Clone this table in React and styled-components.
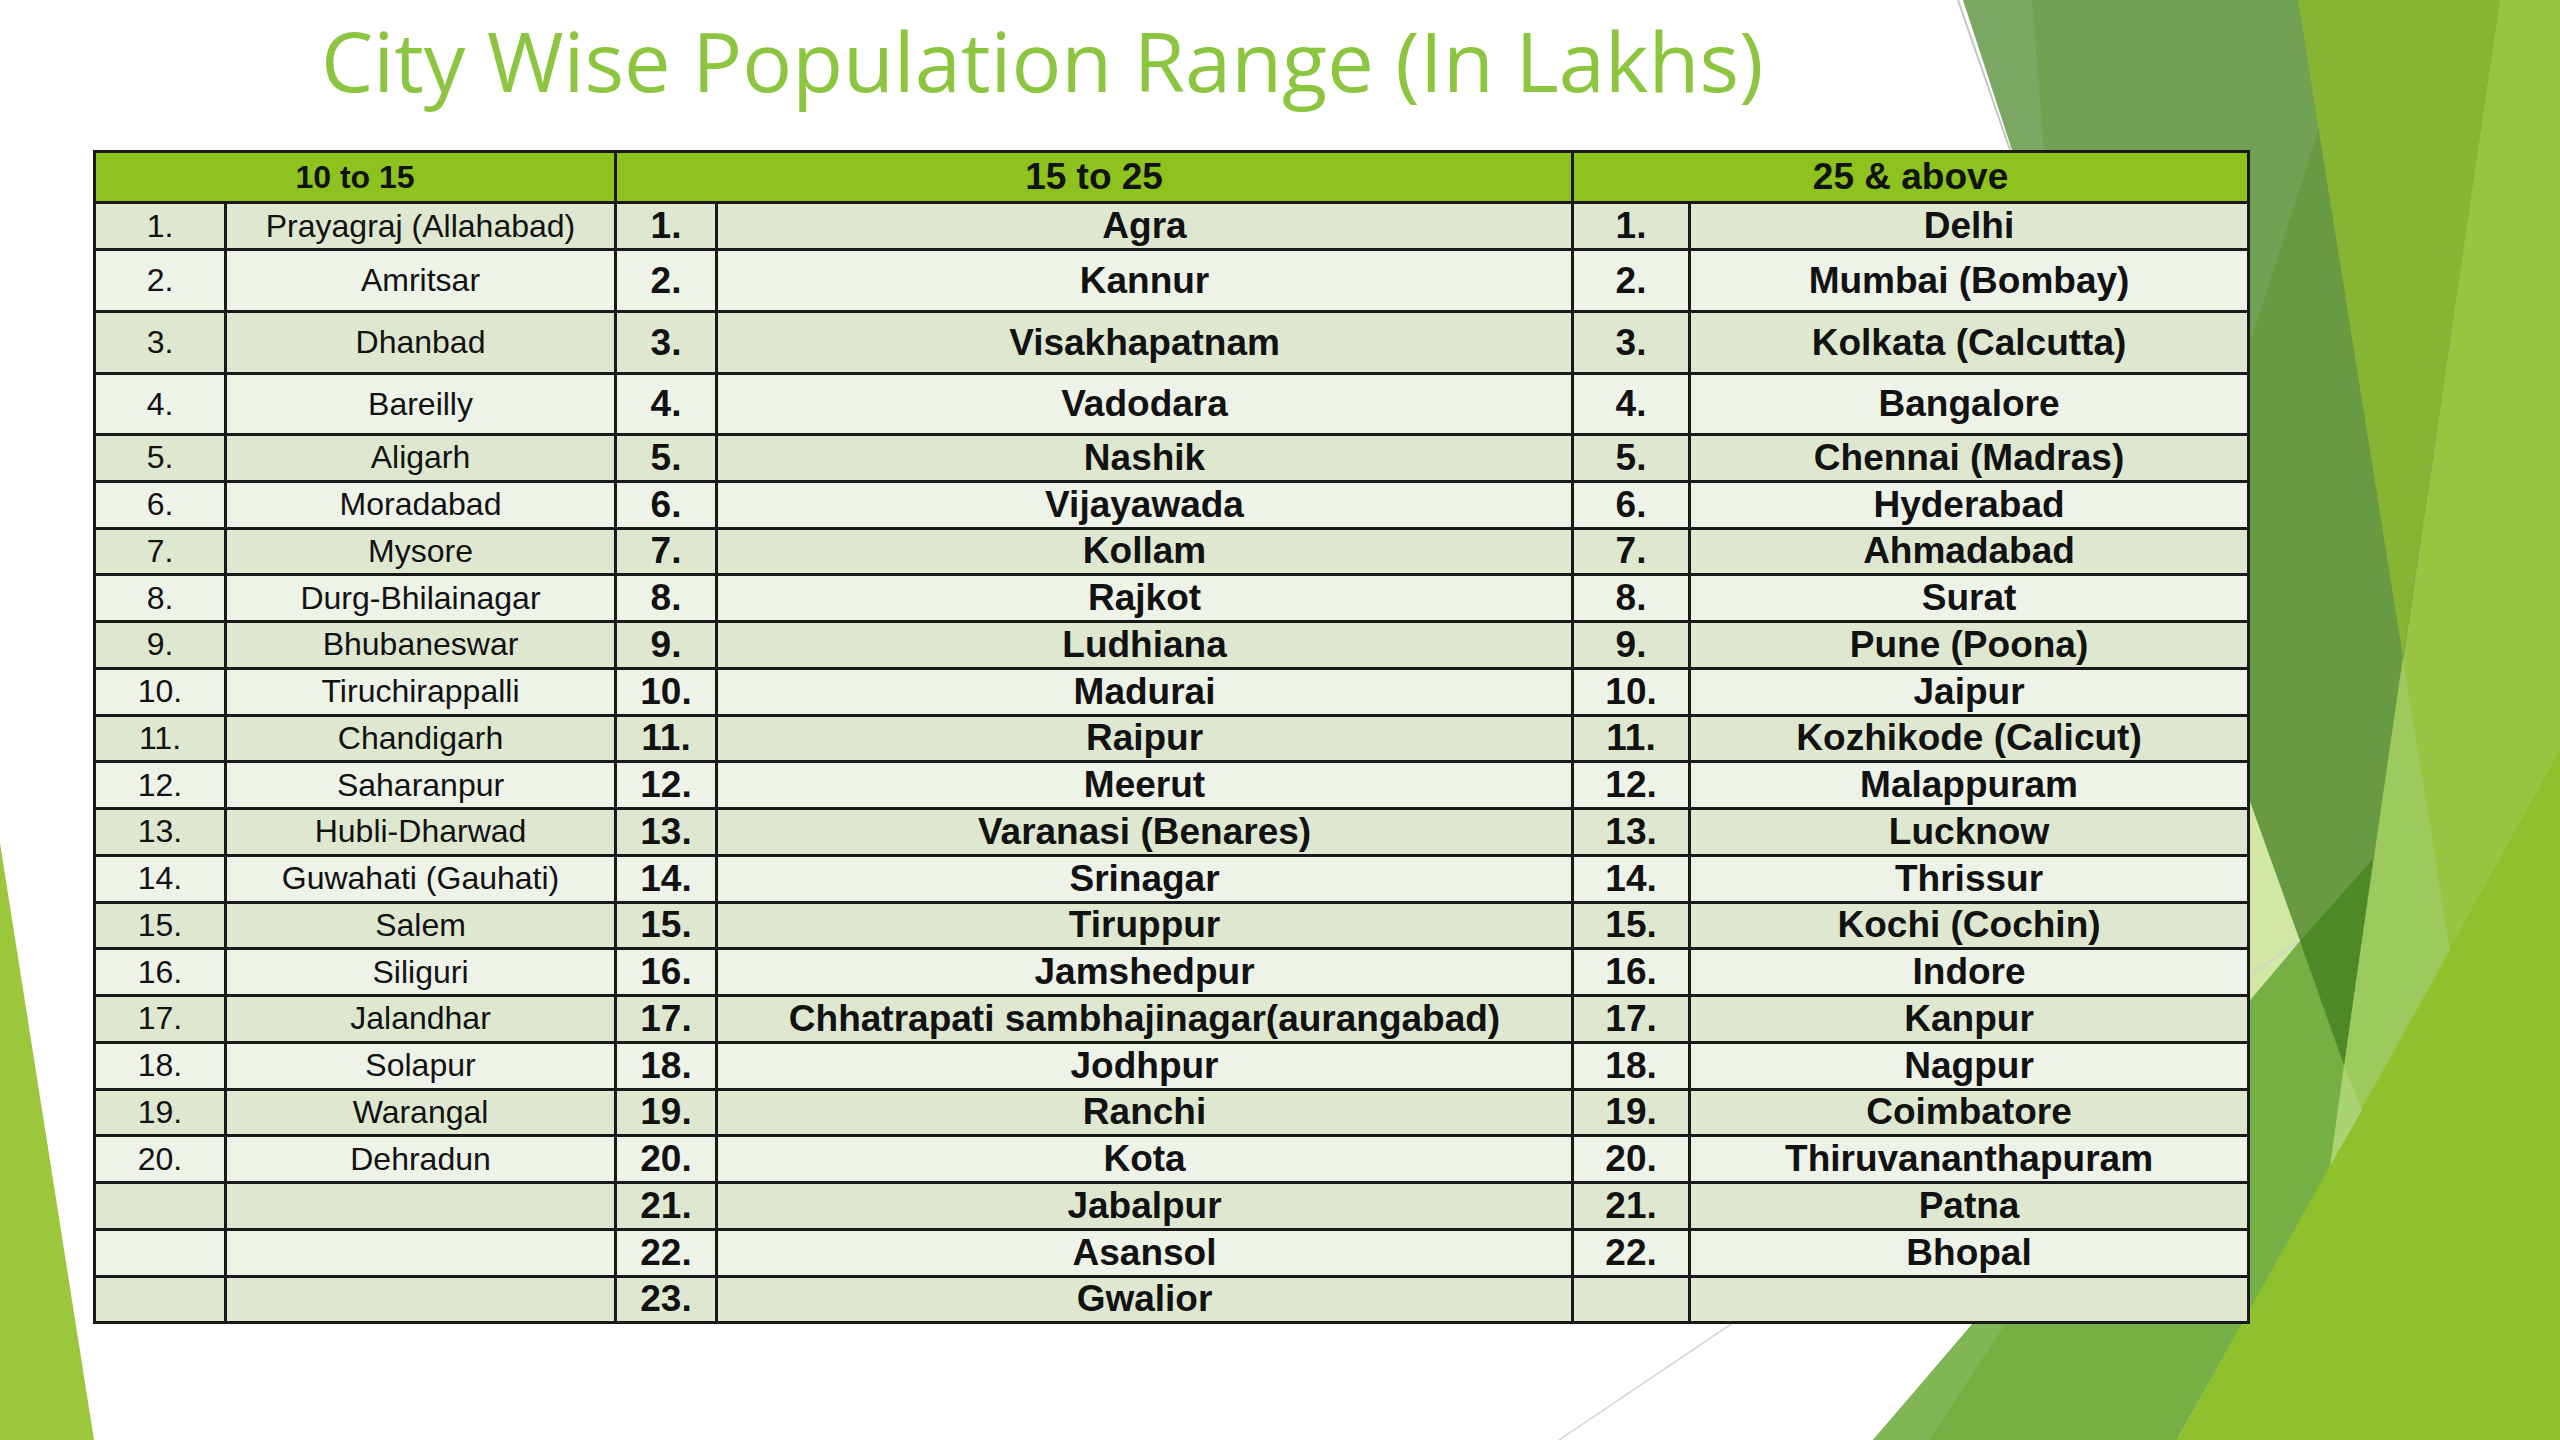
import React from 'react';
import styled, { createGlobalStyle } from 'styled-components';

const Global = createGlobalStyle`
  html, body { margin: 0; padding: 0; background: #ffffff; }
  body { font-family: "Liberation Sans", Arial, sans-serif; }
`;

const Slide = styled.div`
  position: relative;
  width: 2560px;
  height: 1440px;
  overflow: hidden;
  background: #ffffff;
`;

const Backdrop = styled.svg`
  position: absolute;
  inset: 0;
  width: 100%;
  height: 100%;
  z-index: 0;
`;

const Content = styled.main`
  position: relative;
  z-index: 1;
  display: flex;
  flex-direction: column;
  align-items: flex-start;
  padding: 10px 0 0 93px;
`;

const Title = styled.h1`
  margin: 0 0 0 228px;
  font-family: "Open Sans", "Noto Sans", sans-serif;
  font-weight: 400;
  font-size: 83px;
  line-height: 100px;
  color: #8cc540;
  white-space: nowrap;
`;

const Grid = styled.table`
  margin-top: 40px;
  border-collapse: collapse;
  table-layout: fixed;
  width: 2154px;
  font-family: "Liberation Sans", Arial, sans-serif;
  color: #121212;
`;

const Col = styled.col`
  width: ${(p) => p.$w}px;
`;

const HeadRow = styled.tr`
  background: #8dc21f;
`;

const HeadCell = styled.th`
  height: 48px;
  padding: 0;
  border: 3px solid #1a1a1a;
  text-align: center;
  vertical-align: middle;
  font-weight: 700;
  font-size: ${(p) => p.$size}px;
  white-space: nowrap;
`;

const Row = styled.tr`
  background: ${(p) => (p.$odd ? '#dee8d1' : '#eef3e8')};
`;

const Cell = styled.td`
  height: ${(p) => p.$h - 3}px;
  padding: 0;
  border: 3px solid #1a1a1a;
  text-align: center;
  vertical-align: middle;
  font-size: ${(p) => (p.$strong ? 37 : 32)}px;
  font-weight: ${(p) => (p.$strong ? 700 : 400)};
  white-space: nowrap;
  overflow: hidden;
`;

const small = [
  'Prayagraj (Allahabad)', 'Amritsar', 'Dhanbad', 'Bareilly', 'Aligarh', 'Moradabad',
  'Mysore', 'Durg-Bhilainagar', 'Bhubaneswar', 'Tiruchirappalli', 'Chandigarh',
  'Saharanpur', 'Hubli-Dharwad', 'Guwahati (Gauhati)', 'Salem', 'Siliguri',
  'Jalandhar', 'Solapur', 'Warangal', 'Dehradun',
];

const medium = [
  'Agra', 'Kannur', 'Visakhapatnam', 'Vadodara', 'Nashik', 'Vijayawada', 'Kollam',
  'Rajkot', 'Ludhiana', 'Madurai', 'Raipur', 'Meerut', 'Varanasi (Benares)',
  'Srinagar', 'Tiruppur', 'Jamshedpur', 'Chhatrapati sambhajinagar(aurangabad)',
  'Jodhpur', 'Ranchi', 'Kota', 'Jabalpur', 'Asansol', 'Gwalior',
];

const large = [
  'Delhi', 'Mumbai (Bombay)', 'Kolkata (Calcutta)', 'Bangalore', 'Chennai (Madras)',
  'Hyderabad', 'Ahmadabad', 'Surat', 'Pune (Poona)', 'Jaipur', 'Kozhikode (Calicut)',
  'Malappuram', 'Lucknow', 'Thrissur', 'Kochi (Cochin)', 'Indore', 'Kanpur',
  'Nagpur', 'Coimbatore', 'Thiruvananthapuram', 'Patna', 'Bhopal',
];

const heights = [47, 62, 62, 61];
const rowHeight = (i) => (i < heights.length ? heights[i] : 46.75);

const widths = [131, 390, 101, 856, 117, 559];

function Decoration() {
  return (
    <Backdrop viewBox="0 0 2560 1440" preserveAspectRatio="none" aria-hidden="true">
      <polygon points="0,843 94,1440 0,1440" fill="#9cc63b" />
      <polygon points="2500,0 2560,0 2560,1440 2288,1440" fill="#97c441" />
      <polygon points="2177,1440 2560,750 2560,1440" fill="#8fc12c" />
      <polygon points="1963,0 2500,0 2344,1065" fill="#71a152" />
      <polygon points="1963,0 2032,0 2044,150 2012,150" fill="#7aa862" />
      <polygon points="2319,129 2403,657 2344,1065 2150,654" fill="#689943" />
      <polygon points="2298,0 2500,0 2403,657" fill="#86b433" />
      <polygon points="2344,1065 2403,657 2450,950 2330,1166" fill="#9dca5c" />
      <polygon points="2344,1065 2362,1110 2330,1166" fill="#aad471" />
      <polygon points="1873,1440 2300,941 2344,1065 2330,1166 2177,1440" fill="#76b044" />
      <polygon points="1873,1440 1929,1440 2100,1180" fill="#80b654" />
      <polygon points="2300,941 2373,859 2344,1065" fill="#4e8b28" />
      <polygon points="2150,522 2300,941 2150,1119" fill="#d1e7a3" />
      <line x1="1958" y1="0" x2="2010" y2="150" stroke="#c4c4c4" strokeWidth="2" />
      <line x1="1559" y1="1440" x2="2300" y2="941" stroke="#d2d2d2" strokeWidth="1.5" />
    </Backdrop>
  );
}

export default function App() {
  const rows = Array.from({ length: 23 }, (_, i) => i);
  return (
    <>
      <Global />
      <Slide>
        <Decoration />
        <Content>
          <Title>City Wise Population Range (In Lakhs)</Title>
          <Grid>
            <colgroup>
              {widths.map((w, i) => (
                <Col key={i} $w={w} />
              ))}
            </colgroup>
            <thead>
              <HeadRow>
                <HeadCell colSpan={2} $size={32}>10 to 15</HeadCell>
                <HeadCell colSpan={2} $size={37}>15 to 25</HeadCell>
                <HeadCell colSpan={2} $size={37}>25 &amp; above</HeadCell>
              </HeadRow>
            </thead>
            <tbody>
              {rows.map((i) => {
                const h = rowHeight(i);
                return (
                  <Row key={i} $odd={i % 2 === 0}>
                    <Cell $h={h}>{small[i] ? `${i + 1}.` : ''}</Cell>
                    <Cell $h={h}>{small[i] || ''}</Cell>
                    <Cell $h={h} $strong>{medium[i] ? `${i + 1}.` : ''}</Cell>
                    <Cell $h={h} $strong>{medium[i] || ''}</Cell>
                    <Cell $h={h} $strong>{large[i] ? `${i + 1}.` : ''}</Cell>
                    <Cell $h={h} $strong>{large[i] || ''}</Cell>
                  </Row>
                );
              })}
            </tbody>
          </Grid>
        </Content>
      </Slide>
    </>
  );
}
